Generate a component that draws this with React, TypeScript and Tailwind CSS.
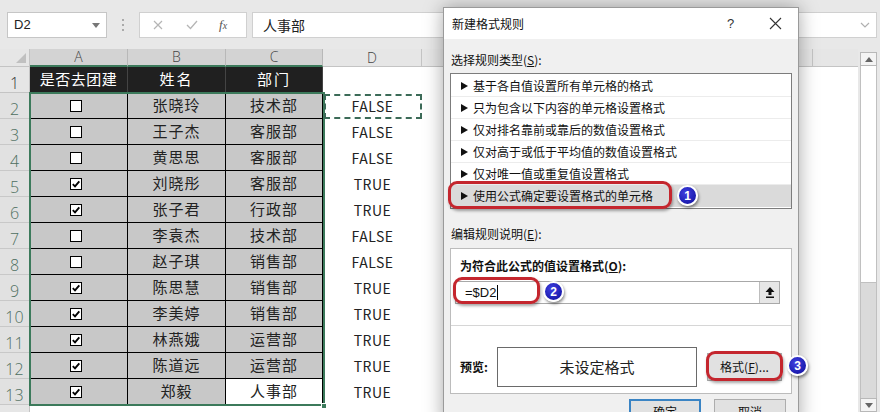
import React from 'react';

const F = "font-['Noto_Sans_CJK_SC','Liberation_Sans',sans-serif]";

type Row = [boolean, string, string];
const data: Row[] = [
  [false, '张晓玲', '技术部'],
  [false, '王子杰', '客服部'],
  [false, '黄思思', '客服部'],
  [true, '刘晓彤', '客服部'],
  [true, '张子君', '行政部'],
  [false, '李袁杰', '技术部'],
  [false, '赵子琪', '销售部'],
  [true, '陈思慧', '销售部'],
  [true, '李美婷', '销售部'],
  [true, '林燕娥', '运营部'],
  [true, '陈道远', '运营部'],
  [true, '郑毅', '人事部'],
];

const items = [
  '基于各自值设置所有单元格的格式',
  '只为包含以下内容的单元格设置格式',
  '仅对排名靠前或靠后的数值设置格式',
  '仅对高于或低于平均值的数值设置格式',
  '仅对唯一值或重复值设置格式',
  '使用公式确定要设置格式的单元格',
];

function Check({ checked }: { checked: boolean }) {
  return (
    <div className="w-[12px] h-[12px] bg-white border border-black flex items-center justify-center">
      {checked && (
        <svg width="10" height="10" viewBox="0 0 10 10">
          <path d="M1.8 5.2 L4 7.4 L8.3 2.4" fill="none" stroke="black" strokeWidth="1.9" />
        </svg>
      )}
    </div>
  );
}

function Badge({ n, left, top }: { n: number; left: number; top: number }) {
  return (
    <div
      className="absolute w-[21px] h-[21px] rounded-full border-2 border-white bg-[radial-gradient(circle_at_40%_35%,#4040e0,#0c0c9a)] shadow-[1px_2px_3px_rgba(0,0,0,0.45)] flex items-center justify-center text-white text-[12px] font-bold leading-none font-['Liberation_Sans',sans-serif]"
      style={{ left, top }}
    >
      {n}
    </div>
  );
}

function RedBox({ left, top, w, h }: { left: number; top: number; w: number; h: number }) {
  return (
    <div
      className="absolute border-[3px] border-[#c4262e] rounded-[9px] shadow-[1px_2px_3px_rgba(0,0,0,0.35)]"
      style={{ left, top, width: w, height: h }}
    />
  );
}

export default function App() {
  return (
    <div className={`relative w-[880px] h-[412px] overflow-hidden bg-[#e8e8e8] ${F}`}>
      {/* formula bar */}
      <div className="h-[49px] flex items-start pt-[12px]">
        <div className="ml-[7px] w-[100px] h-[26px] bg-white border border-[#c6c6c6] flex items-center justify-between pl-[6px] pr-[6px] text-[13px] text-[#222] font-['Liberation_Sans',sans-serif]">
          <span>D2</span>
          <svg width="8" height="5" viewBox="0 0 8 5"><path d="M0 0 L8 0 L4 5 Z" fill="#777" /></svg>
        </div>
        <div className="w-[32px] h-[26px] flex flex-col items-center justify-center gap-[3px]">
          <div className="w-[2px] h-[2px] bg-[#aaa]" />
          <div className="w-[2px] h-[2px] bg-[#aaa]" />
          <div className="w-[2px] h-[2px] bg-[#aaa]" />
        </div>
        <div className="w-[108px] h-[26px] bg-white border border-[#d0d0d0] flex items-center">
          <svg className="ml-[13px]" width="10" height="10" viewBox="0 0 10 10"><path d="M1 1 L9 9 M9 1 L1 9" stroke="#b5b5b5" strokeWidth="1.2" /></svg>
          <svg className="ml-[23px]" width="12" height="10" viewBox="0 0 12 10"><path d="M1 5 L4.5 8.5 L11 1" fill="none" stroke="#b5b5b5" strokeWidth="1.3" /></svg>
          <span className="ml-[21px] text-[13px] italic text-[#555] font-['Liberation_Serif',serif]">f<span className="text-[10px]">x</span></span>
        </div>
        <div className="ml-[5px] w-[625px] h-[26px] bg-white border border-[#d0d0d0] flex items-center justify-between pl-[10px] pr-[6px]">
          <span className="text-[14px] text-[#222]">人事部</span>
          <svg width="10" height="6" viewBox="0 0 10 6"><path d="M1 1 L5 5 L9 1" fill="none" stroke="#b0b0b0" strokeWidth="1.2" /></svg>
        </div>
      </div>

      {/* sheet + scrollbar */}
      <div className="flex h-[363px]">
        <div className="relative w-[858px] bg-white">
          {/* column headers */}
          <div className="flex h-[18px] text-[14px] font-light text-[#444] font-['Open_Sans',sans-serif] leading-none">
            <div className="w-[30px] bg-[#e6e6e6] border-r border-b border-[#c4c4c4] relative">
              <svg className="absolute right-[3px] bottom-[3px]" width="10" height="10" viewBox="0 0 10 10"><path d="M10 0 L10 10 L0 10 Z" fill="#c0c0c0" /></svg>
            </div>
            <div className="w-[98px] bg-[#d3d3d3] border-r border-[#b8b8b8] border-b-2 border-b-[#3c7a5b] flex items-center justify-center">A</div>
            <div className="w-[98px] bg-[#d3d3d3] border-r border-[#b8b8b8] border-b-2 border-b-[#3c7a5b] flex items-center justify-center">B</div>
            <div className="w-[97px] bg-[#d3d3d3] border-r border-[#b8b8b8] border-b-2 border-b-[#3c7a5b] flex items-center justify-center">C</div>
            <div className="w-[99px] bg-[#e6e6e6] border-r border-b border-[#c4c4c4] flex items-center justify-center">D</div>
            <div className="w-[391px] bg-[#e6e6e6] border-r border-b border-[#c4c4c4]" />
            <div className="flex-1 bg-[#e6e6e6] border-b border-[#c4c4c4]" />
          </div>

          {/* row 1 */}
          <div className="flex h-[26px]">
            <div className="w-[30px] bg-[#e6e6e6] border-r border-b border-[#c4c4c4] flex items-end justify-center pb-[1px] text-[16px] font-light leading-none text-[#333] font-['Open_Sans',sans-serif]">1</div>
            <div className="w-[98px] bg-[#202020] border-r border-b border-[#444] flex items-center justify-center text-white text-[15px] tracking-[0.5px]">是否去团建</div>
            <div className="w-[98px] bg-[#202020] border-r border-b border-[#444] flex items-center justify-center text-white text-[15px] tracking-[2px]">姓名</div>
            <div className="w-[97px] bg-[#202020] border-r border-b border-[#444] flex items-center justify-center text-white text-[15px] tracking-[2px]">部门</div>
            <div className="flex-1" />
          </div>

          {data.map((r, i) => {
            const last = i === data.length - 1;
            return (
              <div key={i} className="flex h-[26px]">
                <div className="w-[30px] bg-[#e1e1e1] border-r border-b border-[#c8c8c8] flex items-end justify-center pb-[1px] text-[16px] font-light leading-none text-[#4e6f60] font-['Open_Sans',sans-serif]">{i + 2}</div>
                <div className="w-[98px] bg-[#c8c8c8] border-r border-b border-black flex items-center justify-center">
                  <div className="mr-[6px]"><Check checked={r[0]} /></div>
                </div>
                <div className="w-[98px] bg-[#c8c8c8] border-r border-b border-black flex items-center justify-center text-[15px] tracking-[1px] text-[#222]">{r[1]}</div>
                <div className={last ? 'w-[97px] bg-white border-r border-b border-black flex items-center justify-center text-[15px] tracking-[1px] text-[#222]' : 'w-[97px] bg-[#c8c8c8] border-r border-b border-black flex items-center justify-center text-[15px] tracking-[1px] text-[#222]'}>{r[2]}</div>
                <div className="w-[99px] flex items-center justify-center text-[14px] text-[#222] tracking-[0.5px]">{r[0] ? 'TRUE' : 'FALSE'}</div>
                <div className="flex-1" />
              </div>
            );
          })}
          <div className="flex h-[26px]">
            <div className="w-[30px] bg-[#e6e6e6] border-r border-[#c4c4c4]" />
          </div>

          {/* selection overlays */}
          <div className="absolute left-[29px] top-[43px] w-[296px] h-[314px] border-2 border-[#3c7a5b]" />
          <div className="absolute left-[321px] top-[354px] w-[6px] h-[6px] bg-[#3c7a5b] border border-white" />
          <div className="absolute left-[324px] top-[45px] w-[98px] h-[25px] border-2 border-dashed border-[#3c6b58]" />
        </div>

        {/* scrollbar */}
        <div className="w-[22px] pt-[3px] pl-[2px] pr-[3px] flex flex-col">
          <div className="h-[14px] bg-[#f4f4f4] border border-[#b8b8b8] flex items-center justify-center">
            <svg width="8" height="5" viewBox="0 0 8 5"><path d="M0 5 L8 5 L4 0 Z" fill="#666" /></svg>
          </div>
          <div className="h-[217px] bg-white border-x border-b border-[#c0c0c0]" />
          <div className="flex-1 bg-[#dadada] border-x border-[#c0c0c0]" />
          <div className="h-[14px] bg-[#f4f4f4] border border-[#b8b8b8] flex items-center justify-center">
            <svg width="8" height="5" viewBox="0 0 8 5"><path d="M0 0 L8 0 L4 5 Z" fill="#666" /></svg>
          </div>
        </div>
      </div>

      {/* dialog */}
      <div className="absolute left-[443px] top-[7px] w-[356px] h-[420px] bg-[#f0f0f0] border border-[#9a9a9a] shadow-[0_0_18px_rgba(0,0,0,0.35)] flex flex-col text-[12px] text-[#111]">
        <div className="h-[31px] bg-white flex items-center pl-[8px] relative">
          <span className="text-[12px]">新建格式规则</span>
          <span className="absolute left-[283px] top-[6px] text-[13px] text-[#333] font-['Liberation_Sans',sans-serif]">?</span>
          <svg className="absolute left-[325px] top-[9px]" width="13" height="13" viewBox="0 0 13 13"><path d="M1 1 L12 12 M12 1 L1 12" stroke="#333" strokeWidth="1.1" /></svg>
        </div>
        <div className="px-[6px] flex flex-col">
          <div className="mt-[13px] h-[16px] leading-[16px] pl-[1px]">选择规则类型(<span className="underline">S</span>):</div>
          <div className="mt-[5px] h-[136px] bg-white border border-[#7c7c7c] pt-[1px]">
            {items.map((t, i) => (
              <div key={i} className={i === 5 ? 'h-[22px] flex items-center bg-[#dadada] pl-[10px]' : 'h-[22px] flex items-center border-b border-[#ececec] pl-[10px]'}>
                <svg width="7" height="8" viewBox="0 0 7 8"><path d="M0 0 L7 4 L0 8 Z" fill="#111" /></svg>
                <span className="ml-[5px]">{t}</span>
              </div>
            ))}
          </div>
          <div className="mt-[17px] h-[16px] leading-[16px] pl-[1px]">编辑规则说明(<span className="underline">E</span>):</div>
          <div className="mt-[6px] h-[146px] bg-white border border-[#bcbcbc] flex flex-col">
            <div className="mt-[9px] ml-[9px] h-[16px] leading-[16px] font-bold">为符合此公式的值设置格式(<span className="underline">O</span>):</div>
            <div className="mt-[7px] ml-[4px] w-[325px] h-[23px] border border-[#a8a8a8] bg-white flex items-center">
              <div className="flex-1 pl-[9px] text-[13px] flex items-center font-['Liberation_Sans',sans-serif]">
                =$D2<span className="ml-[1px] w-[1px] h-[15px] bg-black" />
              </div>
              <div className="w-[20px] h-full bg-[#e6e6e6] border-l border-[#bdbdbd] flex items-center justify-center">
                <svg width="10" height="11" viewBox="0 0 10 11"><path d="M5 0 L9.5 5 L6.5 5 L6.5 8 L3.5 8 L3.5 5 L0.5 5 Z" fill="#111" /><rect x="1" y="9.5" width="8" height="1.5" fill="#111" /></svg>
              </div>
            </div>
            <div className="mt-[21px] h-[1px] bg-[#d6d6d6]" />
            <div className="mt-[21px] h-[40px] flex items-center">
              <div className="ml-[9px] w-[37px] font-bold">预览:</div>
              <div className="w-[200px] h-[40px] border border-[#6a6a6a] bg-white flex items-center justify-center text-[15px] text-[#222]">未设定格式</div>
              <div className="ml-[10px] w-[75px] h-[28px] bg-[#e1e1e1] border border-[#adadad] flex items-center justify-center">格式(<span className="underline">F</span>)...</div>
            </div>
          </div>
          <div className="mt-[5px] flex justify-end gap-[13px] pr-[6px]">
            <div className="w-[72px] h-[26px] bg-[#e1e1e1] border-2 border-[#3a84c4] flex items-center justify-center">确定</div>
            <div className="w-[72px] h-[26px] bg-[#e1e1e1] border border-[#adadad] flex items-center justify-center">取消</div>
          </div>
        </div>
      </div>

      {/* annotations */}
      <RedBox left={448} top={181} w={224} h={28} />
      <RedBox left={453} top={277} w={87} h={27} />
      <RedBox left={706} top={351} w={77} h={30} />
      <Badge n={1} left={677} top={185} />
      <Badge n={2} left={543} top={281} />
      <Badge n={3} left={787} top={355} />
    </div>
  );
}
